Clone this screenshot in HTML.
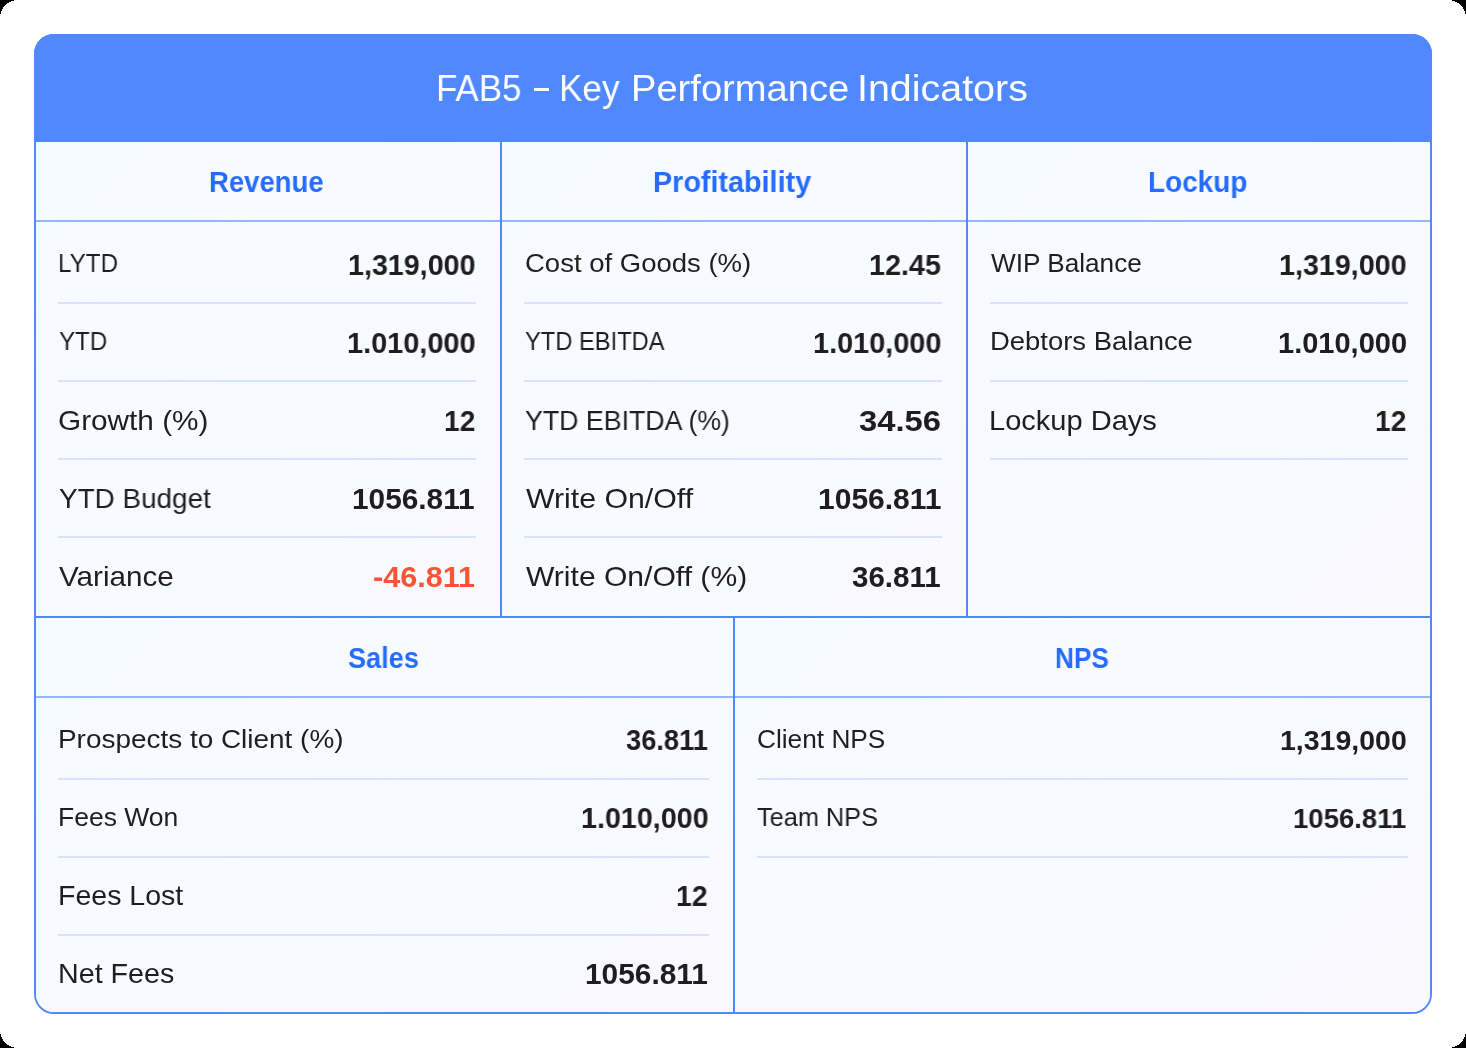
<!DOCTYPE html>
<html><head><meta charset="utf-8"><style>
html,body{margin:0;padding:0;width:1466px;height:1048px;overflow:hidden;background:#fff}
.page{position:absolute;left:0;top:0;width:1466px;height:1048px;background:#fff;overflow:hidden}
.corner{position:absolute;left:0;top:0}
.card{position:absolute;left:34px;top:34px;width:1394px;height:976px;border:2px solid #5088FF;border-radius:20px;background:#F7FBFF;overflow:hidden}
.hdr{position:absolute;left:34px;top:34px;width:1398px;height:108px;background:#5088FF;border-radius:20px 20px 0 0}
.ln{position:absolute;background:#5088FF}
.cell{position:absolute;background:linear-gradient(135deg,#F6FBFF,#F9F9FE)}
.sep{position:absolute;height:2px;background:#D7E3FD}
.t{position:absolute;white-space:nowrap;font-family:"Liberation Sans",sans-serif;color:#1E1E1E;transform-origin:0 0;will-change:transform}
.title{color:#fff}
.sec{color:#266CFF;font-weight:bold}
.val{font-weight:bold}
.neg{color:#F95535}
</style></head><body><div class="page">
<div class="card"></div>
<div class="hdr"></div>
<div class="cell" style="left:36px;top:142px;width:464px;height:474px"></div>
<div class="cell" style="left:502px;top:142px;width:464px;height:474px"></div>
<div class="cell" style="left:968px;top:142px;width:462px;height:474px;border-radius:0"></div>
<div class="cell" style="left:36px;top:618px;width:697px;height:394px;border-radius:0 0 0 18px"></div>
<div class="cell" style="left:735px;top:618px;width:695px;height:394px;border-radius:0 0 18px 0"></div>
<div class="ln" style="left:36px;top:220px;width:1394px;height:2px;opacity:.6"></div>
<div class="ln" style="left:36px;top:616px;width:1394px;height:2px"></div>
<div class="ln" style="left:36px;top:696px;width:1394px;height:2px;opacity:.6"></div>
<div class="ln" style="left:500px;top:142px;width:2px;height:474px"></div>
<div class="ln" style="left:966px;top:142px;width:2px;height:474px"></div>
<div class="ln" style="left:733px;top:617px;width:2px;height:396px"></div>
<div style="position:absolute;left:534px;top:88px;width:15px;height:3px;background:#fff"></div>
<div id="t0" class="t title" style="left:436.05px;top:71px;font-size:36.5px;line-height:36.5px;transform:scaleX(0.9568)">FAB5</div>
<div id="t1" class="t title" style="left:559.45px;top:71px;font-size:36.5px;line-height:36.5px;transform:scaleX(0.9613)">Key</div>
<div id="t2" class="t title" style="left:631.13px;top:71px;font-size:36.5px;line-height:36.5px;transform:scaleX(1.0439)">Performance</div>
<div id="t3" class="t title" style="left:857.18px;top:71px;font-size:36.5px;line-height:36.5px;transform:scaleX(1.0796)">Indicators</div>
<div id="t4" class="t sec" style="left:208.54px;top:168px;font-size:29.0px;line-height:29.0px;transform:scaleX(0.9484)">Revenue</div>
<div id="t5" class="t sec" style="left:652.51px;top:168px;font-size:29.0px;line-height:29.0px;transform:scaleX(0.9910)">Profitability</div>
<div id="t6" class="t sec" style="left:1148.01px;top:168px;font-size:29.0px;line-height:29.0px;transform:scaleX(0.9628)">Lockup</div>
<div id="t7" class="t sec" style="left:347.82px;top:644px;font-size:29.0px;line-height:29.0px;transform:scaleX(0.9346)">Sales</div>
<div id="t8" class="t sec" style="left:1055.39px;top:644px;font-size:29.0px;line-height:29.0px;transform:scaleX(0.9037)">NPS</div>
<div id="t9" class="t lbl" style="left:57.87px;top:250px;font-size:26.0px;line-height:26.0px;transform:scaleX(0.9308)">LYTD</div>
<div id="t10" class="t lbl" style="left:58.98px;top:328px;font-size:26.0px;line-height:26.0px;transform:scaleX(0.9271)">YTD</div>
<div id="t11" class="t lbl" style="left:58.47px;top:407px;font-size:28.0px;line-height:28.0px;transform:scaleX(1.0625)">Growth (%)</div>
<div id="t12" class="t lbl" style="left:59.48px;top:485px;font-size:28.0px;line-height:28.0px;transform:scaleX(0.9954)">YTD Budget</div>
<div id="t13" class="t lbl" style="left:59.49px;top:563px;font-size:28.0px;line-height:28.0px;transform:scaleX(1.0588)">Variance</div>
<div id="t14" class="t val" style="left:348.28px;top:251px;font-size:29.0px;line-height:29.0px;transform:scaleX(0.9876)">1,319,000</div>
<div id="t15" class="t val" style="left:347.04px;top:329px;font-size:29.0px;line-height:29.0px;transform:scaleX(0.9961)">1.010,000</div>
<div id="t16" class="t val" style="left:443.62px;top:407px;font-size:29.0px;line-height:29.0px;transform:scaleX(0.9694)">12</div>
<div id="t17" class="t val" style="left:351.75px;top:485px;font-size:29.0px;line-height:29.0px;transform:scaleX(1.0280)">1056.811</div>
<div id="t18" class="t val neg" style="left:372.66px;top:563px;font-size:29.0px;line-height:29.0px;transform:scaleX(1.0545)">-46.811</div>
<div id="t19" class="t lbl" style="left:524.97px;top:250px;font-size:26.0px;line-height:26.0px;transform:scaleX(1.0577)">Cost of Goods (%)</div>
<div id="t20" class="t lbl" style="left:525.06px;top:328px;font-size:26.0px;line-height:26.0px;transform:scaleX(0.9111)">YTD EBITDA</div>
<div id="t21" class="t lbl" style="left:524.63px;top:407px;font-size:28.0px;line-height:28.0px;transform:scaleX(0.9546)">YTD EBITDA (%)</div>
<div id="t22" class="t lbl" style="left:525.82px;top:485px;font-size:28.0px;line-height:28.0px;transform:scaleX(1.0808)">Write On/Off</div>
<div id="t23" class="t lbl" style="left:525.83px;top:563px;font-size:28.0px;line-height:28.0px;transform:scaleX(1.0741)">Write On/Off (%)</div>
<div id="t24" class="t val" style="left:869.04px;top:251px;font-size:29.0px;line-height:29.0px;transform:scaleX(0.9905)">12.45</div>
<div id="t25" class="t val" style="left:813.41px;top:329px;font-size:29.0px;line-height:29.0px;transform:scaleX(0.9949)">1.010,000</div>
<div id="t26" class="t val" style="left:859.49px;top:407px;font-size:29.0px;line-height:29.0px;transform:scaleX(1.1301)">34.56</div>
<div id="t27" class="t val" style="left:817.71px;top:485px;font-size:29.0px;line-height:29.0px;transform:scaleX(1.0347)">1056.811</div>
<div id="t28" class="t val" style="left:852.32px;top:563px;font-size:29.0px;line-height:29.0px;transform:scaleX(1.0181)">36.811</div>
<div id="t29" class="t lbl" style="left:990.91px;top:250px;font-size:26.0px;line-height:26.0px;transform:scaleX(1.0066)">WIP Balance</div>
<div id="t30" class="t lbl" style="left:989.91px;top:328px;font-size:26.0px;line-height:26.0px;transform:scaleX(1.0554)">Debtors Balance</div>
<div id="t31" class="t lbl" style="left:989.21px;top:407px;font-size:28.0px;line-height:28.0px;transform:scaleX(1.0372)">Lockup Days</div>
<div id="t32" class="t val" style="left:1279.14px;top:251px;font-size:29.0px;line-height:29.0px;transform:scaleX(0.9885)">1,319,000</div>
<div id="t33" class="t val" style="left:1278.34px;top:329px;font-size:29.0px;line-height:29.0px;transform:scaleX(0.9983)">1.010,000</div>
<div id="t34" class="t val" style="left:1375.28px;top:407px;font-size:29.0px;line-height:29.0px;transform:scaleX(0.9694)">12</div>
<div id="t35" class="t lbl" style="left:57.98px;top:726px;font-size:26.0px;line-height:26.0px;transform:scaleX(1.0739)">Prospects to Client (%)</div>
<div id="t36" class="t lbl" style="left:57.83px;top:804px;font-size:26.0px;line-height:26.0px;transform:scaleX(1.0197)">Fees Won</div>
<div id="t37" class="t lbl" style="left:57.65px;top:882px;font-size:28.0px;line-height:28.0px;transform:scaleX(1.0191)">Fees Lost</div>
<div id="t38" class="t lbl" style="left:57.57px;top:960px;font-size:28.0px;line-height:28.0px;transform:scaleX(1.0239)">Net Fees</div>
<div id="t39" class="t val" style="left:625.95px;top:726px;font-size:29.0px;line-height:29.0px;transform:scaleX(0.9397)">36.811</div>
<div id="t40" class="t val" style="left:580.60px;top:804px;font-size:29.0px;line-height:29.0px;transform:scaleX(0.9887)">1.010,000</div>
<div id="t41" class="t val" style="left:676.17px;top:882px;font-size:29.0px;line-height:29.0px;transform:scaleX(0.9762)">12</div>
<div id="t42" class="t val" style="left:584.76px;top:960px;font-size:29.0px;line-height:29.0px;transform:scaleX(1.0299)">1056.811</div>
<div id="t43" class="t lbl" style="left:756.76px;top:726px;font-size:26.0px;line-height:26.0px;transform:scaleX(1.0094)">Client NPS</div>
<div id="t44" class="t lbl" style="left:757.44px;top:804px;font-size:26.0px;line-height:26.0px;transform:scaleX(0.9736)">Team NPS</div>
<div id="t45" class="t val" style="left:1280.21px;top:727px;font-size:28.0px;line-height:28.0px;transform:scaleX(1.0175)">1,319,000</div>
<div id="t46" class="t val" style="left:1292.54px;top:805px;font-size:28.0px;line-height:28.0px;transform:scaleX(0.9825)">1056.811</div>
<div class="sep" style="left:58px;width:418px;top:302px"></div>
<div class="sep" style="left:58px;width:418px;top:380px"></div>
<div class="sep" style="left:58px;width:418px;top:458px"></div>
<div class="sep" style="left:58px;width:418px;top:536px"></div>
<div class="sep" style="left:524px;width:418px;top:302px"></div>
<div class="sep" style="left:524px;width:418px;top:380px"></div>
<div class="sep" style="left:524px;width:418px;top:458px"></div>
<div class="sep" style="left:524px;width:418px;top:536px"></div>
<div class="sep" style="left:990px;width:418px;top:302px"></div>
<div class="sep" style="left:990px;width:418px;top:380px"></div>
<div class="sep" style="left:990px;width:418px;top:458px"></div>
<div class="sep" style="left:58px;width:651px;top:778px"></div>
<div class="sep" style="left:58px;width:651px;top:856px"></div>
<div class="sep" style="left:58px;width:651px;top:934px"></div>
<div class="sep" style="left:757px;width:651px;top:778px"></div>
<div class="sep" style="left:757px;width:651px;top:856px"></div>

<svg class="corner" width="1466" height="1048" shape-rendering="crispEdges"><path fill="#000" fill-rule="evenodd" d="M0 0H1466V1048H0Z M18 0H1448A18 18 0 0 1 1466 18V1030A18 18 0 0 1 1448 1048H18A18 18 0 0 1 0 1030V18A18 18 0 0 1 18 0Z"/></svg>
</div></body></html>
